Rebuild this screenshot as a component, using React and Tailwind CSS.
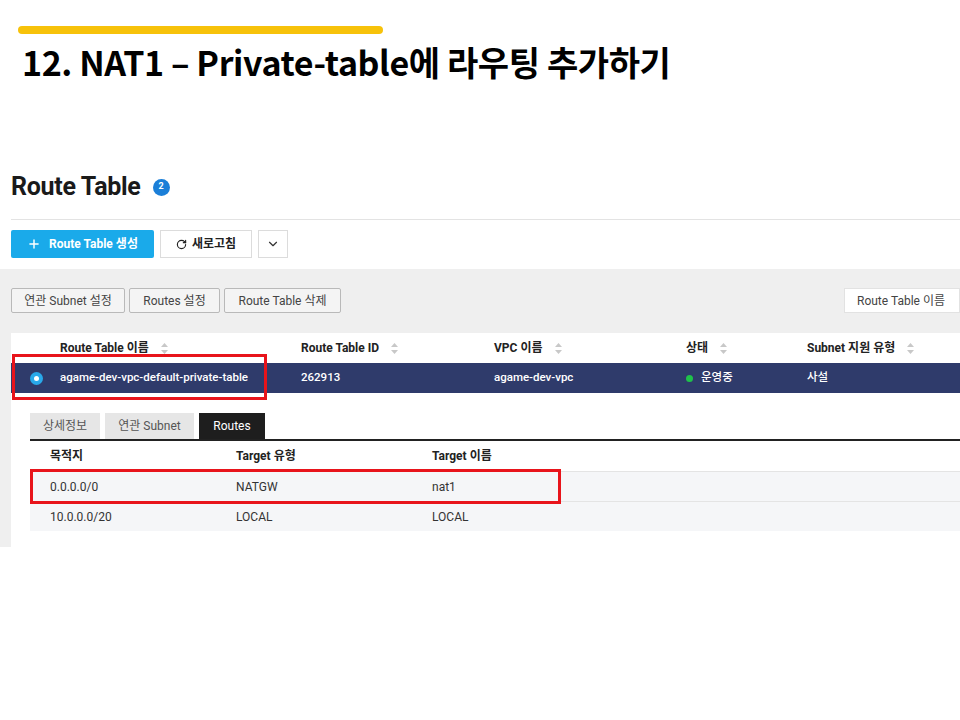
import { Plus, RotateCw, ChevronDown } from 'lucide-react';

const font = { fontFamily: 'Roboto, "Noto Sans CJK KR", sans-serif' };

function Sort() {
  return (
    <svg width="7" height="11" viewBox="0 0 7 11" className="ml-3 inline-block">
      <path d="M3.5 0 L7 4 H0 Z" fill="#c8c8c8" />
      <path d="M3.5 11 L7 7 H0 Z" fill="#c8c8c8" />
    </svg>
  );
}

export default function App() {
  const th = 'text-[12px] font-bold text-[#222]';
  const act = 'h-[25px] px-3 border border-[#b9b9b9] bg-[#f4f4f4] text-[12px] text-[#444] rounded-[2px]';

  return (
    <div className="w-[960px] h-[720px] bg-white relative overflow-hidden" style={font}>
      <div className="pt-[26px] pl-[18px]">
        <div className="w-[365px] h-[8px] rounded-full bg-[#f7c20a]" />
      </div>
      <h1 className="pl-[22px] mt-[8px] text-[34px] font-bold text-black leading-[40px] tracking-[-0.4px]" style={{ fontFamily: '"Noto Sans CJK KR", sans-serif' }}>
        12. NAT1 – Private-table에 라우팅 추가하기
      </h1>

      <div className="mt-[90px]">
        <div className="flex items-center pl-[11px] h-[30px]">
          <span className="text-[25px] font-bold text-[#1a1a1a] tracking-[-0.3px]">Route Table</span>
          <span className="ml-[12px] w-[17px] h-[17px] rounded-full bg-[#1b7fd8] text-white text-[9px] font-bold flex items-center justify-center">2</span>
        </div>
        <div className="ml-[11px] mt-[17px] border-t border-[#e3e3e3]" />
        <div className="flex items-center gap-[6px] pl-[11px] mt-[10px] h-[28px]">
          <button className="h-[28px] w-[143px] bg-[#1aaaea] text-white text-[12px] font-bold flex items-center justify-center gap-[8px] rounded-[2px]">
            <Plus size={14} strokeWidth={2.5} /> Route Table 생성
          </button>
          <button className="h-[28px] w-[92px] border border-[#dcdcdc] bg-white text-[12px] font-bold text-[#222] flex items-center justify-center gap-[5px]">
            <RotateCw size={11} strokeWidth={2.5} /> 새로고침
          </button>
          <button className="h-[28px] w-[30px] border border-[#dcdcdc] bg-white flex items-center justify-center text-[#333]">
            <ChevronDown size={14} strokeWidth={2} />
          </button>
        </div>

        <div className="mt-[11px] bg-[#efefef] h-[278px] flex flex-col">
          <div className="flex items-center justify-between pl-[11px] pt-[19px]">
            <div className="flex gap-[4px]">
              <button className={act + ' w-[114px]'}>연관 Subnet 설정</button>
              <button className={act + ' w-[91px]'}>Routes 설정</button>
              <button className={act + ' w-[117px]'}>Route Table 삭제</button>
            </div>
            <div className="w-[116px] h-[25px] bg-white border border-[#e2e2e2] text-[12px] text-[#444] flex items-center pl-[12px]">Route Table 이름</div>
          </div>

          <div className="ml-[11px] mt-[20px] bg-white flex-1 relative">
            <div className="flex items-center h-[30px]">
              <div className="w-[49px]" />
              <div className={th + ' w-[241px] flex items-center'}>Route Table 이름<Sort /></div>
              <div className={th + ' w-[193px] flex items-center'}>Route Table ID<Sort /></div>
              <div className={th + ' w-[192px] flex items-center'}>VPC 이름<Sort /></div>
              <div className={th + ' w-[121px] flex items-center'}>상태<Sort /></div>
              <div className={th + ' flex items-center'}>Subnet 지원 유형<Sort /></div>
            </div>
            <div className="flex items-center h-[30px] bg-[#2f3b6b] text-white text-[11.5px] font-medium">
              <div className="w-[49px] flex justify-center pl-[2px]">
                <span className="w-[13px] h-[13px] rounded-full bg-[#29a9ea] flex items-center justify-center">
                  <span className="w-[5px] h-[5px] rounded-full bg-white" />
                </span>
              </div>
              <div className="w-[241px]">agame-dev-vpc-default-private-table</div>
              <div className="w-[193px]">262913</div>
              <div className="w-[192px]">agame-dev-vpc</div>
              <div className="w-[121px] flex items-center gap-[8px]">
                <span className="w-[7px] h-[7px] rounded-full bg-[#1fc24a]" />운영중
              </div>
              <div>사설</div>
            </div>
            <div className="absolute left-[1px] top-[21px] w-[255px] h-[46px] border-[3px] border-[#e8141b]" />

            <div className="ml-[19px] mt-[20px]">
              <div className="flex gap-[5px] items-end h-[26px]">
                <div className="w-[70px] h-[26px] bg-[#e6e6e6] text-[12px] text-[#555] flex items-center justify-center">상세정보</div>
                <div className="w-[89px] h-[26px] bg-[#e6e6e6] text-[12px] text-[#555] flex items-center justify-center">연관 Subnet</div>
                <div className="w-[66px] h-[26px] bg-[#1e1e1e] text-[12px] text-white flex items-center justify-center">Routes</div>
              </div>
              <div className="border-t-2 border-[#222]" />
              <div className="flex items-center h-[30px] text-[12px] font-bold text-[#222]">
                <div className="w-[206px] pl-[20px]">목적지</div>
                <div className="w-[196px]">Target 유형</div>
                <div>Target 이름</div>
              </div>
              <div className="flex items-center h-[30px] text-[12px] text-[#333] bg-[#f5f6f8] border-t border-[#e4e4e4]">
                <div className="w-[206px] pl-[20px]">0.0.0.0/0</div>
                <div className="w-[196px]">NATGW</div>
                <div>nat1</div>
              </div>
              <div className="flex items-center h-[30px] text-[12px] text-[#333] bg-[#f5f6f8] border-t border-[#e4e4e4]">
                <div className="w-[206px] pl-[20px]">10.0.0.0/20</div>
                <div className="w-[196px]">LOCAL</div>
                <div>LOCAL</div>
              </div>
            </div>
            <div className="absolute left-[19px] top-[136px] w-[531px] h-[35px] border-[3px] border-[#e8141b]" />
          </div>
        </div>
      </div>
    </div>
  );
}
